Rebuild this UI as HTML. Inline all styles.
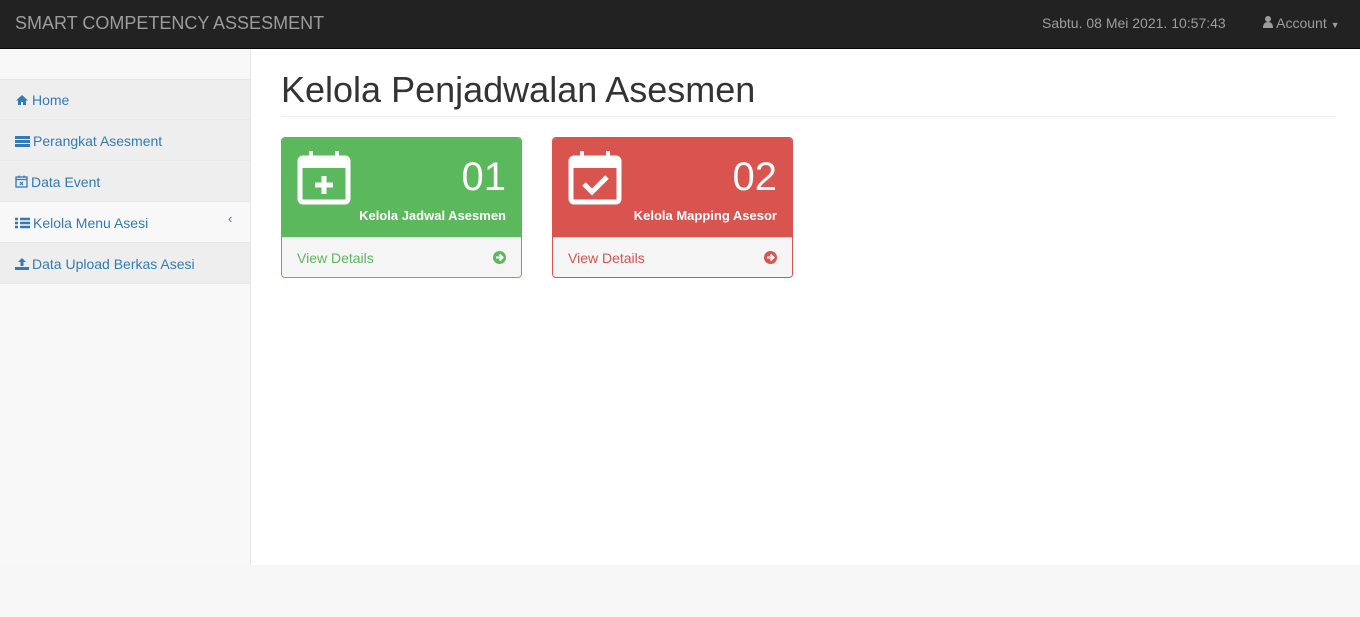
<!DOCTYPE html>
<html><head><meta charset="utf-8"><style>
*{box-sizing:border-box;margin:0;padding:0}
body{width:1360px;height:617px;background:#f7f7f7;font-family:"Liberation Sans",Arial,sans-serif;font-size:14px;color:#333;position:relative;overflow:hidden}
.nav{position:absolute;left:0;top:0;width:1360px;height:49px;background:#222;border-bottom:1px solid #080808}
.brand{position:absolute;left:15px;top:13px;font-size:18px;color:#9d9d9d}
.date{position:absolute;left:1042px;top:15px;color:#9d9d9d;font-size:14px}
.acc{position:absolute;left:1263px;top:15px;color:#9d9d9d;font-size:14px}
.side{position:absolute;left:0;top:49px;width:251px;height:516px;background:#f8f8f8;border-right:1px solid #e7e7e7}
.item{position:absolute;left:0;width:250px;height:41px;border-bottom:1px solid #e7e7e7;background:#eee;color:#337ab7;padding:13px 15px 0;font-size:14px}
.item svg{vertical-align:-1px;margin-right:3px}
.main{position:absolute;left:251px;top:49px;width:1109px;height:516px;background:#fff}
h1{position:absolute;left:30px;top:20px;font-size:36px;font-weight:400;color:#333}
.hr{position:absolute;left:30px;top:67px;width:1055px;border-top:1px solid #eee}
.card{position:absolute;top:88px;width:241px;height:141px;border-radius:4px;overflow:hidden}
.head{height:99px;color:#fff;position:relative}
.num{position:absolute;right:15px;top:17px;font-size:40px}
.lbl{position:absolute;right:15px;top:70px;font-size:13px;font-weight:bold}
.foot{height:40px;background:#f5f5f5;border-top:1px solid #ddd;padding:12px 15px;position:relative}
.foot .ic{position:absolute;right:15px;top:13px}
</style></head><body>
<div class="nav"><div class="brand">SMART COMPETENCY ASSESMENT</div><div class="date">Sabtu. 08 Mei 2021. 10:57:43</div><div class="acc"><svg width="10" height="12" viewBox="0 0 10 12"><circle cx="5" cy="3" r="3" fill="#9d9d9d"/><path d="M0 12 Q0 6 5 6 Q10 6 10 12Z" fill="#9d9d9d"/></svg> Account <span style="font-size:9px">▼</span></div></div>
<div class="side">
<div class="item" style="top:30px;border-top:1px solid #e7e7e7;padding-top:12px"><svg width="14" height="12" viewBox="0 0 14 12"><path d="M7 1 L1 6.5 H3 V11 H6 V8 H8 V11 H11 V6.5 H13Z" fill="#337ab7"/></svg>Home</div>
<div class="item" style="top:71px"><svg width="15" height="12" viewBox="0 0 15 12"><rect x="0" y="1" width="15" height="3" fill="#337ab7"/><rect x="0" y="5" width="15" height="3" fill="#337ab7"/><rect x="0" y="9" width="15" height="3" fill="#337ab7"/></svg>Perangkat Asesment</div>
<div class="item" style="top:112px"><svg width="13" height="13" viewBox="0 0 13 13"><rect x="1" y="2" width="11" height="10" fill="none" stroke="#337ab7" stroke-width="1.3"/><path d="M1 4.5H12M4 0.5V3M9 0.5V3M5 7L8 10M8 7L5 10" stroke="#337ab7" stroke-width="1.2"/></svg>Data Event</div>
<div class="item" style="top:153px;background:#f8f8f8"><svg width="15" height="12" viewBox="0 0 15 12"><path d="M0 2H3M5 2H15M0 6H3M5 6H15M0 10H3M5 10H15" stroke="#337ab7" stroke-width="2.5"/></svg>Kelola Menu Asesi<span style="position:absolute;left:228px;top:9px;font-size:13px">‹</span></div>
<div class="item" style="top:194px"><svg width="14" height="12" viewBox="0 0 14 12"><path d="M7 0 L11 4 H8.5 V8 H5.5 V4 H3Z M0 9 H14 V12 H0Z" fill="#337ab7"/></svg>Data Upload Berkas Asesi</div>
</div>
<div class="main">
<h1>Kelola Penjadwalan Asesmen</h1><div class="hr"></div>
<div class="card" style="left:30px;border:1px solid #5cb85c">
<div class="head" style="background:#5cb85c"><svg style="position:absolute;left:15px;top:11px" width="54" height="56" viewBox="0 0 54 56"><rect x="3" y="9" width="48" height="44" rx="3" fill="none" stroke="#fff" stroke-width="5"/><rect x="3" y="9" width="48" height="10" fill="#fff"/><rect x="12" y="2" width="4" height="12" fill="#fff"/><rect x="38" y="2" width="4" height="12" fill="#fff"/><path d="M27 27V45M18 36H36" stroke="#fff" stroke-width="5"/></svg><div class="num">01</div><div class="lbl">Kelola Jadwal Asesmen</div></div>
<div class="foot" style="color:#5cb85c">View Details<svg class="ic" width="13" height="13" viewBox="0 0 13 13"><circle cx="6.5" cy="6.5" r="6.5" fill="#5cb85c"/><path d="M3 6.5H9M6.5 3.5L9.5 6.5L6.5 9.5" stroke="#fff" stroke-width="2" fill="none"/></svg></div></div>
<div class="card" style="left:301px;border:1px solid #d9534f">
<div class="head" style="background:#d9534f"><svg style="position:absolute;left:15px;top:11px" width="54" height="56" viewBox="0 0 54 56"><rect x="3" y="9" width="48" height="44" rx="3" fill="none" stroke="#fff" stroke-width="5"/><rect x="3" y="9" width="48" height="10" fill="#fff"/><rect x="12" y="2" width="4" height="12" fill="#fff"/><rect x="38" y="2" width="4" height="12" fill="#fff"/><path d="M16 35L24 43L39 28" stroke="#fff" stroke-width="5" fill="none"/></svg><div class="num">02</div><div class="lbl">Kelola Mapping Asesor</div></div>
<div class="foot" style="color:#d9534f">View Details<svg class="ic" width="13" height="13" viewBox="0 0 13 13"><circle cx="6.5" cy="6.5" r="6.5" fill="#d9534f"/><path d="M3 6.5H9M6.5 3.5L9.5 6.5L6.5 9.5" stroke="#fff" stroke-width="2" fill="none"/></svg></div></div>
</div>
</body></html>
